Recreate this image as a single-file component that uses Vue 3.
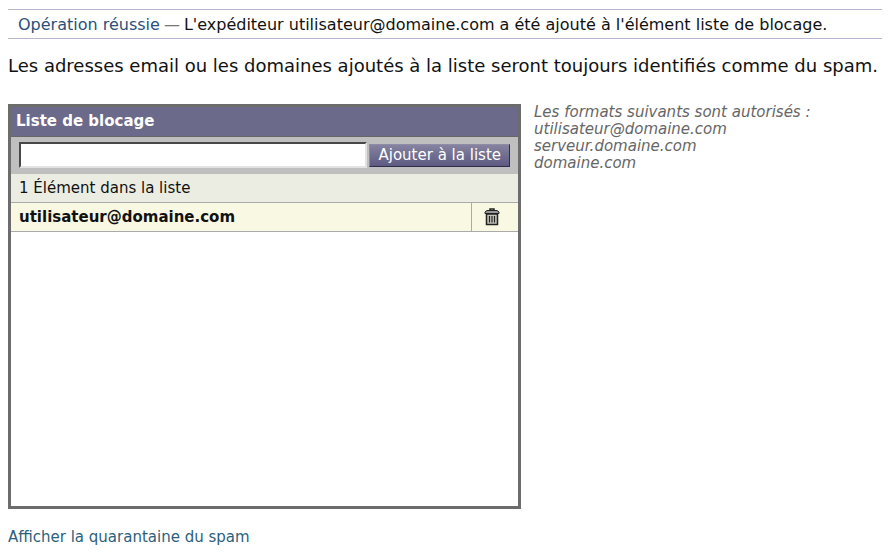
<template>
    <main class="page">
        <p class="notice" role="status">
            <span class="notice__title">Opération réussie</span>
            <span class="notice__dash">—</span>
            <span>L'expéditeur utilisateur@domaine.com a été ajouté à l'élément liste de blocage.</span>
        </p>

        <p class="intro">Les adresses email ou les domaines ajoutés à la liste seront toujours identifiés comme du spam.</p>

        <div class="columns">
            <section class="panel">
                <h2 class="panel__title">
                    <label for="sender">Liste de blocage</label>
                </h2>
                <form class="panel__form" @submit.prevent="addEntry">
                    <input id="sender" v-model="sender" class="panel__input" type="text" />
                    <button class="panel__add" type="submit">Ajouter à la liste</button>
                </form>
                <p class="panel__count">{{ entries.length }} Élément dans la liste</p>
                <ul class="entries">
                    <li v-for="(entry, index) in entries" :key="entry" class="entry">
                        <span class="entry__name">{{ entry }}</span>
                        <button class="entry__delete" type="button" aria-label="Supprimer" @click="removeEntry(index)">
                            <svg aria-hidden="true" width="16" height="18" viewBox="0 0 16 18">
                                <path d="M6 2.5V1h4v1.5" fill="none" stroke="#222" stroke-width="1.5" />
                                <path d="M1 5.5V4l2-1.5h10L15 4v1.5z" fill="#999" stroke="#222" />
                                <path d="M2.5 6h11v10.5h-11z" fill="#c4c4bc" stroke="#222" stroke-width="1.5" />
                                <path d="M5.5 8v6.5M8 8v6.5M10.5 8v6.5" stroke="#222" stroke-width="1.2" />
                            </svg>
                        </button>
                    </li>
                </ul>
            </section>

            <aside class="formats">
                Les formats suivants sont autorisés :<br />
                utilisateur@domaine.com<br />
                serveur.domaine.com<br />
                domaine.com
            </aside>
        </div>

        <a class="quarantine" href="#">Afficher la quarantaine du spam</a>
    </main>
</template>

<script setup>
import { ref } from 'vue'

const sender = ref('')
const entries = ref(['utilisateur@domaine.com'])

function addEntry() {
    const value = sender.value.trim()
    if (value && !entries.value.includes(value)) {
        entries.value.push(value)
    }
    sender.value = ''
}

function removeEntry(index) {
    entries.value.splice(index, 1)
}
</script>

<style>
body {
    margin: 0;
    background: #fff;
}
</style>

<style scoped>
.page {
    padding: 9px 14px 8px 8px;
    font-family: Verdana, "DejaVu Sans", sans-serif;
    font-size: 15px;
    line-height: 17px;
    color: #111;
}

.notice {
    display: flex;
    gap: 4px;
    margin: 0;
    padding: 6px 10px 5px;
    border-top: 1px solid #b9b5cf;
    border-bottom: 1px solid #b9b5cf;
    font-size: 16px;
}

.notice__title {
    color: #2c5078;
}

.notice__dash {
    color: #777;
}

.intro {
    margin: 18px 0 0;
    font-size: 18px;
}

.columns {
    display: flex;
    gap: 13px;
    margin-top: 30px;
}

.panel {
    box-sizing: border-box;
    flex: 0 1 513px;
    min-height: 405px;
    border: 3px solid #6c6c6c;
}

.panel__title {
    margin: 0;
    padding: 6px 5px;
    border-bottom: 1px solid #666;
    background: #6b6a8b;
    color: #fff;
    font-size: 15px;
}

.panel__form {
    display: flex;
    align-items: center;
    gap: 2px;
    padding: 5px 8px 6px;
    background: #bfbfbf;
}

.panel__input {
    box-sizing: border-box;
    flex: 1;
    min-width: 0;
    height: 26px;
    padding: 2px 4px;
    border: 2px solid;
    border-color: #484848 #e2e2e2 #e2e2e2 #484848;
    background: #fff;
    font: inherit;
}

.panel__add {
    height: 23px;
    padding: 0 8px;
    border: 1px solid;
    border-color: #8d8ba6 #2f2e4a #2f2e4a #8d8ba6;
    background: linear-gradient(#8583a0, #5c5a80);
    color: #fff;
    font: inherit;
    white-space: nowrap;
}

.panel__count {
    margin: 0;
    padding: 6px 8px 5px;
    background: #ebede3;
}

.entries {
    margin: 0;
    padding: 0;
    list-style: none;
    border-top: 1px solid #aaa;
}

.entry {
    display: flex;
    border-bottom: 1px solid #aaa;
    background: #f8f8e3;
}

.entry__name {
    flex: 1;
    padding: 6px 8px 5px;
    font-weight: bold;
}

.entry__delete {
    display: flex;
    align-items: center;
    justify-content: center;
    width: 47px;
    padding: 0 6px 0 0;
    border: 0;
    border-left: 1px solid #aaa;
    background: none;
}

.formats {
    flex: 1;
    color: #666;
    font-style: italic;
}

.quarantine {
    display: inline-block;
    margin-top: 20px;
    color: #2c5f7c;
    text-decoration: none;
}
</style>
